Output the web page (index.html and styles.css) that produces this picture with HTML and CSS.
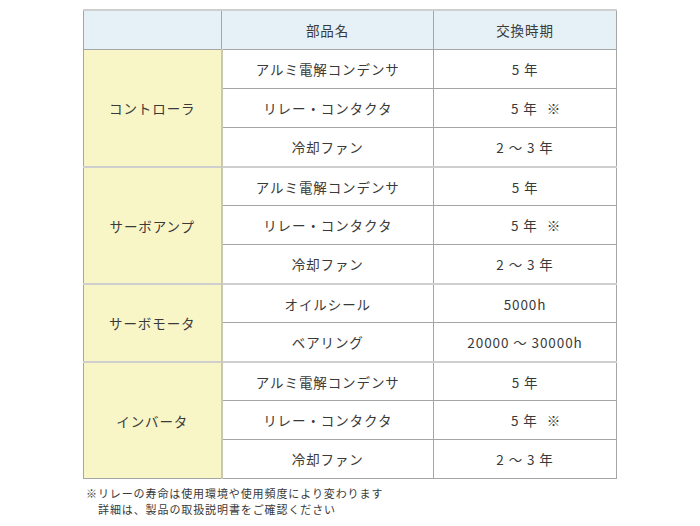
FILE: index.html
```html
<!DOCTYPE html>
<html lang="ja">
<head>
<meta charset="utf-8">
<link rel="stylesheet" href="styles.css">
</head>
<body>
<div class="wrap">
<table class="parts">
  <thead>
    <tr><th class="corner"></th><th>部品名</th><th>交換時期</th></tr>
  </thead>
  <tbody class="group">
    <tr><td class="unit" rowspan="3">コントローラ</td><td>アルミ電解コンデンサ</td><td>5 年</td></tr>
    <tr><td>リレー・コンタクタ</td><td>5 年<span class="mark">※</span></td></tr>
    <tr><td>冷却ファン</td><td>2 ～ 3 年</td></tr>
  </tbody>
  <tbody class="group">
    <tr><td class="unit" rowspan="3">サーボアンプ</td><td>アルミ電解コンデンサ</td><td>5 年</td></tr>
    <tr><td>リレー・コンタクタ</td><td>5 年<span class="mark">※</span></td></tr>
    <tr><td>冷却ファン</td><td>2 ～ 3 年</td></tr>
  </tbody>
  <tbody class="group">
    <tr><td class="unit" rowspan="2">サーボモータ</td><td>オイルシール</td><td>5000h</td></tr>
    <tr><td>ベアリング</td><td>20000 ～ 30000h</td></tr>
  </tbody>
  <tbody class="group">
    <tr><td class="unit" rowspan="3">インバータ</td><td>アルミ電解コンデンサ</td><td>5 年</td></tr>
    <tr><td>リレー・コンタクタ</td><td>5 年<span class="mark">※</span></td></tr>
    <tr><td>冷却ファン</td><td>2 ～ 3 年</td></tr>
  </tbody>
</table>
<p class="note">※リレーの寿命は使用環境や使用頻度により変わります<br><span class="indent">詳細は、製品の取扱説明書をご確認ください</span></p>
</div>
</body>
</html>
```
FILE: styles.css
```css
html, body {
  margin: 0;
  padding: 0;
  background: #fff;
}
body {
  font-family: "Noto Sans CJK JP", "Noto Sans", sans-serif;
  color: #3a3a3a;
}
.wrap {
  padding: 9px 0 0 83px;
}
.parts {
  border-collapse: collapse;
  width: 534px;
  table-layout: fixed;
  font-size: 13.5px;
  letter-spacing: 0.9px;
  border-top: 2px solid #cfcfcf;
  border-left: 1px solid #a5a5a5;
  border-right: 1px solid #a5a5a5;
  border-bottom: 1px solid #a5a5a5;
}
.parts th, .parts td {
  height: 38px;
  padding: 0;
  text-align: center;
  vertical-align: middle;
  font-weight: normal;
  border: 1px solid #a5a5a5;
}
.parts th {
  background: #e6f0f7;
}
.parts th:nth-child(1) { width: 137px; }
.parts th:nth-child(2) { width: 211px; }
.parts .unit {
  background: #f8f5c7;
  border-right: 2px solid #c9c8b2;
}
.parts .group + .group tr:first-child td {
  border-top: 2px solid #cfcfcf;
  height: 37px;
}
.mark {
  display: inline-block;
  margin-left: 9px;
  margin-right: -22px;
}
.note {
  margin: 6px 0 0 3px;
  font-size: 11px;
  line-height: 16px;
  letter-spacing: 0.9px;
}
.indent {
  padding-left: 12px;
}
```
